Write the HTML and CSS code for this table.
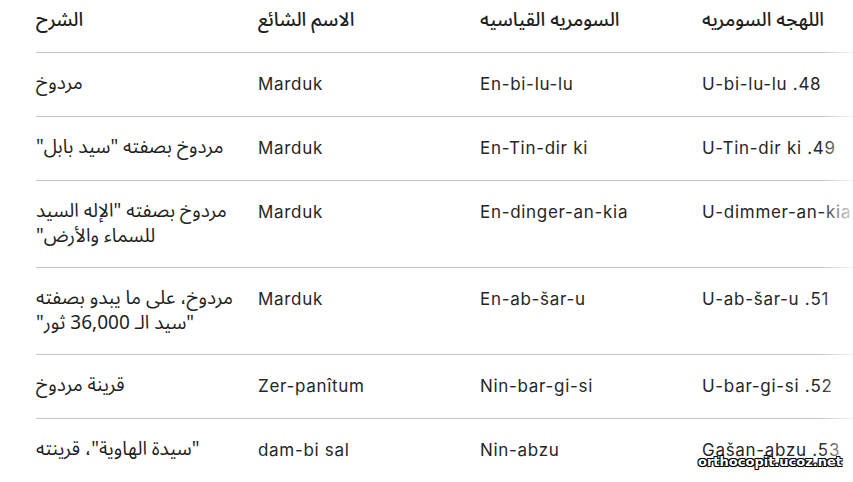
FILE: index.html
```html
<!DOCTYPE html>
<html lang="ar">
<head>
<meta charset="utf-8">
<title>Sumerian names</title>
<link rel="stylesheet" href="styles.css">
</head>
<body>
<div class="frame">
  <table class="names" dir="rtl">
    <colgroup>
      <col class="col">
      <col class="col">
      <col class="col">
      <col class="col">
    </colgroup>
    <thead>
      <tr>
        <th>اللهجه السومريه</th>
        <th>السومريه القياسيه</th>
        <th>الاسم الشائع</th>
        <th>الشرح</th>
      </tr>
    </thead>
    <tbody>
      <tr>
        <td class="lat">48. U-bi-lu-lu</td>
        <td class="lat">En-bi-lu-lu</td>
        <td class="lat">Marduk</td>
        <td class="ar">مردوخ</td>
      </tr>
      <tr>
        <td class="lat">49. U-Tin-dir ki</td>
        <td class="lat">En-Tin-dir ki</td>
        <td class="lat">Marduk</td>
        <td class="ar">مردوخ بصفته "سيد بابل"</td>
      </tr>
      <tr>
        <td class="lat">50. U-dimmer-an-kia</td>
        <td class="lat">En-dinger-an-kia</td>
        <td class="lat">Marduk</td>
        <td class="ar">مردوخ بصفته "الإله السيد للسماء والأرض"</td>
      </tr>
      <tr>
        <td class="lat">51. U-ab-šar-u</td>
        <td class="lat">En-ab-šar-u</td>
        <td class="lat">Marduk</td>
        <td class="ar">مردوخ، على ما يبدو بصفته "سيد الـ 36,000 ثور"</td>
      </tr>
      <tr>
        <td class="lat">52. U-bar-gi-si</td>
        <td class="lat">Nin-bar-gi-si</td>
        <td class="lat">Zer-panîtum</td>
        <td class="ar">قرينة مردوخ</td>
      </tr>
      <tr>
        <td class="lat">53. Gašan-abzu</td>
        <td class="lat">Nin-abzu</td>
        <td class="lat">dam-bi sal</td>
        <td class="ar">"سيدة الهاوية"، قرينته</td>
      </tr>
    </tbody>
  </table>
  <div class="fade"></div>
  <div class="watermark">orthocopit.ucoz.net</div>
</div>
</body>
</html>
```

FILE: styles.css
```css
html, body {
  margin: 0;
  padding: 0;
  background: #ffffff;
}

body {
  width: 853px;
  height: 482px;
  overflow: hidden;
}

.frame {
  position: relative;
  width: 853px;
  height: 482px;
  overflow: hidden;
  padding-left: 36px;
  box-sizing: border-box;
}

.names {
  width: 888px;
  border-collapse: collapse;
  table-layout: fixed;
  font-family: "Noto Sans Arabic", "DejaVu Sans", sans-serif;
  font-size: 19px;
  line-height: 25px;
  color: #1f1f1f;
}

.col {
  width: 222px;
}

.names th,
.names td {
  text-align: left;
  vertical-align: top;
  padding: 18px 16px 18px 0;
  border-bottom: 1px solid #c7c7c7;
  font-weight: 400;
}

.names th {
  padding-top: 8px;
  padding-bottom: 19px;
  font-weight: 500;
}

.names td.lat {
  font-family: Inter, Roboto, sans-serif;
  font-size: 17px;
  line-height: 27px;
  letter-spacing: 0.7px;
  color: #262626;
}

.fade {
  position: absolute;
  top: 0;
  right: 0;
  width: 32px;
  height: 100%;
  background: linear-gradient(to right, rgba(255,255,255,0), rgba(255,255,255,0.85));
}

.watermark {
  position: absolute;
  right: 11px;
  bottom: 13px;
  font-family: "DejaVu Sans", sans-serif;
  font-weight: 700;
  font-size: 13px;
  color: #ffffff;
  text-shadow: -1px -1px 0 #000, 1px -1px 0 #000, -1px 1px 0 #000, 1px 1px 0 #000, 0 0 2px #000;
}
```
